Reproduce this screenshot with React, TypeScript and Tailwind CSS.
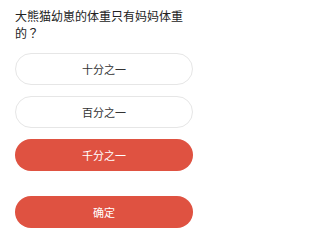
import React, { useState } from 'react';

const options = ['十分之一', '百分之一', '千分之一'];

const App: React.FC = () => {
  const [selected, setSelected] = useState(2);

  return (
    <div
      className="w-[204px] h-[237px] bg-white overflow-hidden"
      style={{ fontFamily: '"Noto Sans CJK SC", "Liberation Sans", sans-serif' }}
    >
      <div className="pl-[15px] pr-[11px] pt-[7px]">
        {/* Question */}
        <p className="text-[12px] leading-[17px] text-[#222]">
          大熊猫幼崽的体重只有妈妈体重的
          <span className="font-['Noto_Sans_CJK_JP',sans-serif]">？</span>
        </p>

        {/* Options */}
        <div className="mt-[12px] flex flex-col gap-[11px]">
          {options.map((opt, i) => (
            <button
              key={opt}
              onClick={() => setSelected(i)}
              className={
                selected === i
                  ? 'h-[32px] w-full rounded-full bg-[#df5241] text-white text-[11px]'
                  : 'h-[32px] w-full rounded-full border border-[#e6e6e6] bg-white text-[#333] text-[11px]'
              }
            >
              {opt}
            </button>
          ))}
        </div>

        {/* Confirm */}
        <button className="mt-[25px] h-[32px] w-full rounded-full bg-[#df5241] text-white text-[11px]">
          确定
        </button>
      </div>
    </div>
  );
};

export default App;
